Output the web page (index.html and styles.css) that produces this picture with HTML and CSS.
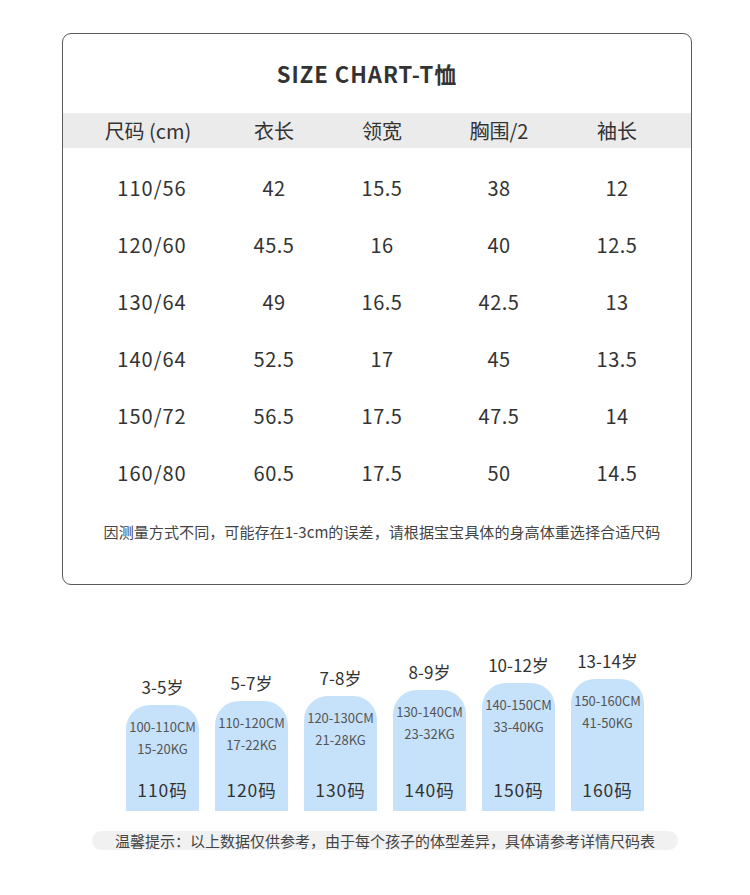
FILE: index.html
```html
<!DOCTYPE html>
<html lang="zh">
<head>
<meta charset="utf-8">
<link rel="stylesheet" href="styles.css">
</head>
<body>
<div class="page">
  <section class="card">
    <h1 class="title">SIZE CHART-T恤</h1>
    <div class="row head">
      <div class="c c1">尺码 (cm)</div>
      <div class="c">衣长</div>
      <div class="c">领宽</div>
      <div class="c">胸围/2</div>
      <div class="c">袖长</div>
    </div>
    <div class="body">
      <div class="row data"><div class="c c1">110/56</div><div class="c">42</div><div class="c">15.5</div><div class="c">38</div><div class="c">12</div></div>
      <div class="row data"><div class="c c1">120/60</div><div class="c">45.5</div><div class="c">16</div><div class="c">40</div><div class="c">12.5</div></div>
      <div class="row data"><div class="c c1">130/64</div><div class="c">49</div><div class="c">16.5</div><div class="c">42.5</div><div class="c">13</div></div>
      <div class="row data"><div class="c c1">140/64</div><div class="c">52.5</div><div class="c">17</div><div class="c">45</div><div class="c">13.5</div></div>
      <div class="row data"><div class="c c1">150/72</div><div class="c">56.5</div><div class="c">17.5</div><div class="c">47.5</div><div class="c">14</div></div>
      <div class="row data"><div class="c c1">160/80</div><div class="c">60.5</div><div class="c">17.5</div><div class="c">50</div><div class="c">14.5</div></div>
    </div>
    <p class="note">因测量方式不同，可能存在1-3cm的误差，请根据宝宝具体的身高体重选择合适尺码</p>
  </section>

  <section class="sizes">
    <div class="col">
      <div class="age">3-5岁</div>
      <div class="block h1"><div class="sm">100-110CM</div><div class="sm">15-20KG</div><div class="code">110码</div></div>
    </div>
    <div class="col">
      <div class="age">5-7岁</div>
      <div class="block h2"><div class="sm">110-120CM</div><div class="sm">17-22KG</div><div class="code">120码</div></div>
    </div>
    <div class="col">
      <div class="age">7-8岁</div>
      <div class="block h3"><div class="sm">120-130CM</div><div class="sm">21-28KG</div><div class="code">130码</div></div>
    </div>
    <div class="col">
      <div class="age">8-9岁</div>
      <div class="block h4"><div class="sm">130-140CM</div><div class="sm">23-32KG</div><div class="code">140码</div></div>
    </div>
    <div class="col">
      <div class="age">10-12岁</div>
      <div class="block h5"><div class="sm">140-150CM</div><div class="sm">33-40KG</div><div class="code">150码</div></div>
    </div>
    <div class="col">
      <div class="age">13-14岁</div>
      <div class="block h6"><div class="sm">150-160CM</div><div class="sm">41-50KG</div><div class="code">160码</div></div>
    </div>
  </section>

  <div class="tip">温馨提示：以上数据仅供参考，由于每个孩子的体型差异，具体请参考详情尺码表</div>
</div>
</body>
</html>
```

FILE: styles.css
```css
* { box-sizing: border-box; margin: 0; padding: 0; }
html, body { background: #fff; }
body {
  margin: 0;
  font-family: "Noto Sans CJK SC", "Noto Sans", sans-serif;
  color: #333;
  width: 750px;
  height: 895px;
  overflow: hidden;
}
.page { padding-top: 33px; }

.card {
  margin-left: 62px;
  width: 630px;
  height: 552px;
  border: 1px solid #5a5a5a;
  border-radius: 9px;
}
.title {
  font-size: 22px;
  font-weight: 700;
  letter-spacing: 1px;
  text-align: center;
  line-height: 28px;
  padding-top: 25px;
  padding-right: 20px;
  height: 79px;
  color: #333;
}
.row {
  display: grid;
  grid-template-columns: 170px 82px 134px 100px 136px;
  align-items: center;
}
.c { text-align: center; white-space: nowrap; }
.head {
  background: #ebebeb;
  height: 35px;
  font-size: 20px;
}
.body { padding-top: 11px; }
.data {
  height: 57px;
  font-size: 20px;
  letter-spacing: 0.5px;
  font-variant-numeric: tabular-nums;
}
.data .c1 { padding-left: 8px; letter-spacing: 1px; }
.note {
  margin-top: 19px;
  padding-left: 10px;
  text-align: center;
  font-size: 15.1px;
  line-height: 22px;
  color: #444;
}

.sizes {
  margin-left: 126px;
  display: flex;
  gap: 16px;
  align-items: flex-end;
  height: 226px;
}
.col {
  width: 73px;
  display: flex;
  flex-direction: column;
  align-items: center;
}
.age {
  font-size: 17px;
  line-height: 20px;
  margin-bottom: 8px;
  color: #333;
  white-space: nowrap;
}
.block {
  width: 73px;
  background: #c6e2fb;
  border-radius: 24px 24px 0 0;
  display: flex;
  flex-direction: column;
  align-items: center;
  padding-top: 11px;
  padding-bottom: 11px;
}
.h1 { height: 106px; }
.h2 { height: 110px; }
.h3 { height: 115px; }
.h4 { height: 121px; }
.h5 { height: 128px; }
.h6 { height: 132px; }
.sm {
  font-size: 13px;
  line-height: 22px;
  color: #555;
  white-space: nowrap;
}
.code {
  margin-top: auto;
  font-size: 17.5px;
  line-height: 20px;
  letter-spacing: 1px;
  color: #333;
  font-variant-numeric: tabular-nums;
}

.tip {
  margin: 20px 0 0 92px;
  width: 586px;
  height: 19px;
  border-radius: 10px;
  background: #f1f1f1;
  text-align: center;
  font-size: 15px;
  line-height: 19px;
  color: #444;
  white-space: nowrap;
}
```
